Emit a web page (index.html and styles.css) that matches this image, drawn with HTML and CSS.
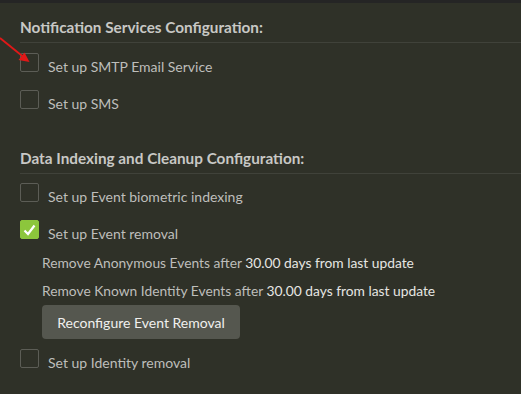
FILE: index.html
```html
<!DOCTYPE html>
<html lang="en">
<head>
  <meta charset="UTF-8" />
  <title>Configuration</title>
  <link rel="stylesheet" href="styles.css">
</head>
<body>
  <div class="topbar"></div>
  <div class="panel">
    <svg class="arrow" width="40" height="70" viewBox="0 0 40 70">
      <line x1="0" y1="38" x2="26" y2="59" stroke="#e01818" stroke-width="1.8" />
      <path d="M29.5 62 L18.5 60 L24.5 52.5 Z" fill="#e01818" />
    </svg>

    <section class="group">
      <h2>Notification Services Configuration:</h2>
      <label class="check"><span class="box"></span><span class="txt">Set up SMTP Email Service</span></label>
      <label class="check"><span class="box"></span><span class="txt">Set up SMS</span></label>
    </section>

    <section class="group second">
      <h2>Data Indexing and Cleanup Configuration:</h2>
      <label class="check"><span class="box"></span><span class="txt">Set up Event biometric indexing</span></label>
      <label class="check"><span class="box on">
        <svg width="13" height="12" viewBox="0 0 13 12"><path d="M1.5 6.5 L5 10 L11.5 1.5" fill="none" stroke="#fff" stroke-width="2.2" /></svg>
      </span><span class="txt">Set up Event removal</span></label>
      <div class="details">
        <p>Remove Anonymous Events after <b>30.00 days from last update</b></p>
        <p>Remove Known Identity Events after <b>30.00 days from last update</b></p>
        <button class="reconf">Reconfigure Event Removal</button>
      </div>
      <label class="check last"><span class="box"></span><span class="txt">Set up Identity removal</span></label>
    </section>
  </div>
</body>
</html>
```

FILE: styles.css
```css
html, body {
  margin: 0;
  padding: 0;
  height: 100%;
  background: #2f3128;
  font-family: Lato, 'Open Sans', sans-serif;
  color: #bebebb;
  overflow: hidden;
}
.topbar {
  height: 3px;
  background: #252525;
}
.panel {
  position: relative;
  padding: 14px 0 0 20px;
}
.arrow {
  position: absolute;
  left: 0;
  top: -3px;
}
h2 {
  margin: 0;
  font-size: 15.3px;
  font-weight: 700;
  color: #c8c8c5;
  line-height: 20px;
  padding-bottom: 5px;
  border-bottom: 1px solid #40423a;
}
.group h2 {
  margin-bottom: 10px;
}
.second {
  margin-top: 39px;
}
.second h2 {
  margin-bottom: 9px;
}
.check {
  display: flex;
  align-items: center;
  gap: 9px;
  height: 19px;
  margin-bottom: 18px;
  font-size: 14px;
}
.check .txt {
  line-height: 19px;
  margin-top: 8px;
}
.box {
  width: 17px;
  height: 17px;
  border: 1px solid #5c5d56;
  border-radius: 2px;
  display: flex;
  align-items: center;
  justify-content: center;
}
.box.on {
  background: #8cc63c;
  border-color: #8cc63c;
}
.details {
  padding-left: 22px;
  margin-top: -8px;
}
.details p {
  margin: 0;
  font-size: 13.8px;
  line-height: 28px;
}
.details b {
  font-weight: 400;
  color: #e6e6e3;
}
.reconf {
  display: block;
  width: 198px;
  height: 34px;
  background: #55574f;
  border: none;
  border-radius: 4px;
  color: #f0f0ee;
  font-family: Lato, 'Open Sans', sans-serif;
  font-size: 14px;
  cursor: pointer;
}
.check.last {
  margin-top: 10px;
}
```
